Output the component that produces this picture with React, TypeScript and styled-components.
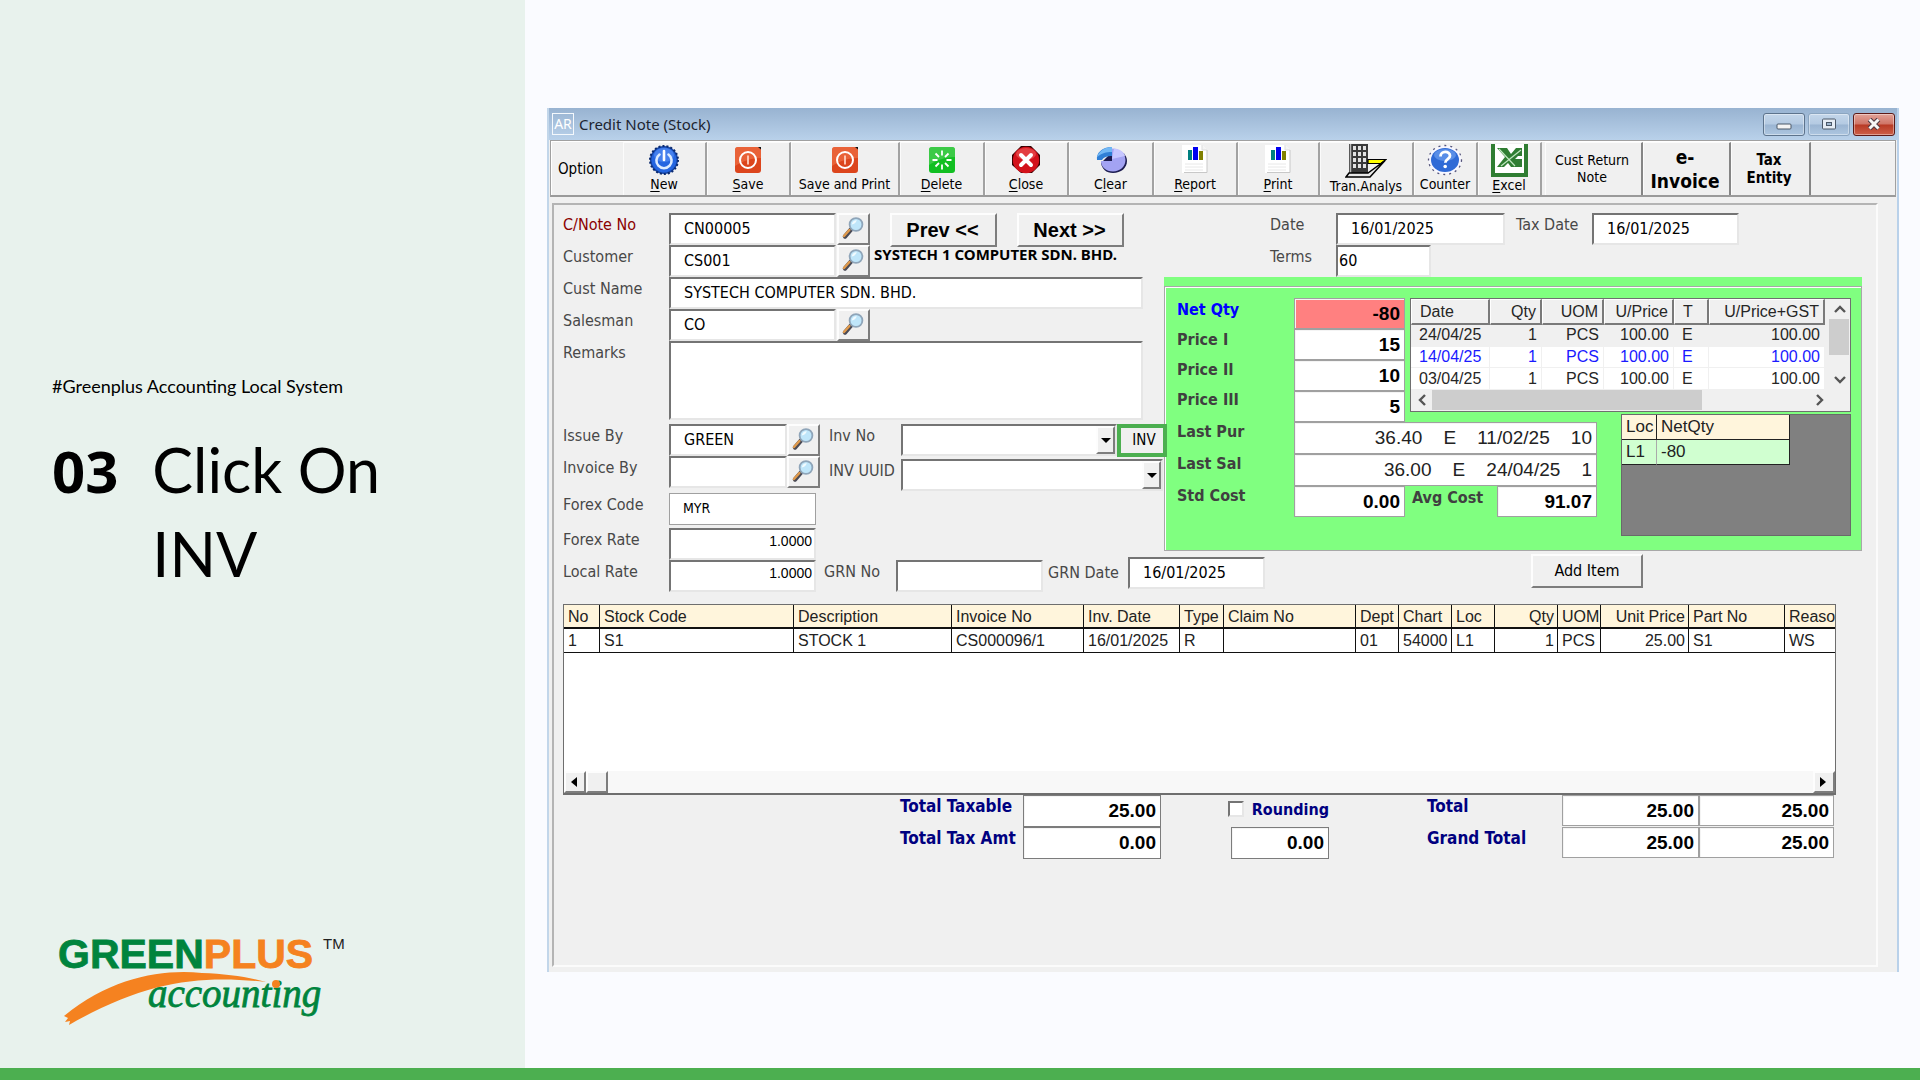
import React from "react";
import styled, { createGlobalStyle, css } from "styled-components";

const ui = `"DejaVu Sans Condensed", "DejaVu Sans", "Noto Sans", sans-serif`;
const arial = `"Liberation Sans", Arial, sans-serif`;
const noto = `"Noto Sans", "Open Sans", sans-serif`;

const Global = createGlobalStyle`
  * { box-sizing: border-box; }
  body { margin: 0; background: #fafbff; }
  button, input, select, textarea { font: inherit; color: inherit; border-radius: 0; margin: 0; }
`;

/* ---------- slide ---------- */
const Slide = styled.div`
  min-height: 100vh;
  display: flex;
  flex-direction: column;
  background: #fafbff;
`;
const Columns = styled.div`
  flex: 1;
  display: flex;
`;
const Aside = styled.aside`
  flex: none;
  width: 525px;
  display: flex;
  flex-direction: column;
  padding: 372px 0 36px 52px;
  background: #e8f2ed;
  color: #000;
  font-family: Lato, sans-serif;
`;
const Tagline = styled.p`
  margin: 0;
  font-size: 18px;
  line-height: 28px;
`;
const Step = styled.h1`
  margin: 28px 0 0;
  display: flex;
  align-items: baseline;
  gap: 34px;
  font-size: 61px;
  line-height: 84px;
  font-weight: 400;
`;
const StepNo = styled.span`
  flex: none;
  font-family: "Open Sans", "Noto Sans", sans-serif;
  font-size: 58px;
  font-weight: 700;
`;
const StepText = styled.span`
  max-width: 300px;
`;
const Logo = styled.svg`
  display: block;
  margin-top: auto;
  width: 300px;
  height: 100px;
`;
const Footer = styled.footer`
  height: 12px;
  background: #4caf50;
`;
const Stage = styled.main`
  flex: 1;
  min-width: 0;
  padding: 108px 21px 90px 22px;
`;

/* ---------- window ---------- */
const Window = styled.section`
  background: #f0f0f0;
  border-left: 2px solid #c2d6ea;
  border-right: 2px solid #b9d1ea;
  font-family: ${ui};
  font-size: 16px;
  color: #000;
`;
const TitleBar = styled.header`
  height: 32px;
  display: flex;
  align-items: center;
  padding: 0 2px 0 3px;
  background: linear-gradient(#98b3d1, #b9d1ea);
`;
const AppBadge = styled.span`
  width: 22px;
  height: 22px;
  border: 1px solid #f4f8fc;
  color: #fff;
  font: 14px/20px ${noto};
  text-align: center;
`;
const Title = styled.h2`
  flex: 1;
  margin: 0 0 0 5px;
  font: 400 15px/24px ${noto};
  color: #1c2430;
`;
const WinButtons = styled.div`
  display: flex;
  gap: 3px;
`;
const WinButton = styled.button<{ $kind: "min" | "max" | "close" }>`
  width: 42px;
  height: 23px;
  padding: 0;
  display: grid;
  place-items: center;
  border: 1px solid ${(p) => (p.$kind === "close" ? "#5d1a17" : p.$kind === "min" ? "#5d738c" : "#8ba5c0")};
  border-radius: 3px;
  box-shadow: inset 0 0 0 1px rgba(255, 255, 255, 0.4);
  background: ${(p) =>
    p.$kind === "close"
      ? "linear-gradient(#e2a398, #cf7466 48%, #b83a25 52%, #cd6048)"
      : "linear-gradient(#c3d6ea, #b4cae2 48%, #9bb5d2 52%, #adc6e0)"};
`;

/* ---------- toolbar ---------- */
const Toolbar = styled.nav`
  height: 57px;
  display: flex;
  margin: 0 1px;
  border: 1px solid #a0a0a0;
  border-bottom: 2px solid #9a9a9a;
  box-shadow: inset 1px 1px 0 #fff;
  padding: 1px 0 0;
  font-size: 14px;
  line-height: 17px;
`;
const ToolCaption = styled.span`
  width: 72px;
  padding: 17px 0 0 7px;
  font-size: 15px;
  line-height: 20px;
`;
const Tool = styled.button<{ $w: number; $push?: boolean }>`
  flex: none;
  width: ${(p) => p.$w}px;
  margin-left: ${(p) => (p.$push ? 3 : 0)}px;
  padding: 1px 1px 0 0;
  display: flex;
  flex-direction: column;
  align-items: center;
  justify-content: space-between;
  background: #f0f0f0;
  border: 1px solid;
  border-width: 1px 2px 0 1px;
  border-color: #fbfbfb #a2a2a2 #a2a2a2 #fbfbfb;
  white-space: nowrap;
  svg { flex: none; width: 34px; height: 32px; }
  u { text-underline-offset: 2px; }
`;
const ToolLabel = styled.span`
  position: relative;
  height: 21px;
  line-height: 16px;
`;
const TextTool = styled(Tool)<{ $size?: number }>`
  justify-content: center;
  padding: 0 3px 0 0;
  white-space: pre-line;
  border-right-color: #858585;
  ${(p) => p.$size && css`
    font-weight: 700;
    font-size: ${p.$size}px;
    line-height: ${p.$size > 16 ? 24 : 18}px;
  `}
`;

/* ---------- form ---------- */
const Body = styled.div`
  padding: 6px 19px 5px 3px;
`;
const Panel = styled.form`
  border: 2px solid;
  border-color: #b4b4b4 #fbfbfb #fbfbfb #b4b4b4;
  padding: 8px 9px 106px;
`;
const FormGrid = styled.div`
  display: flex;
`;
const LeftCol = styled.div`
  flex: none;
  width: 601px;
`;
const RightCol = styled.div`
  flex: none;
  width: 698px;
`;
const Row = styled.div<{ $mb?: number; $pad?: number }>`
  display: flex;
  align-items: flex-start;
  margin-bottom: ${(p) => p.$mb ?? 0}px;
  padding-left: ${(p) => p.$pad ?? 0}px;
`;
const Label = styled.label<{ $w: number; $red?: boolean }>`
  flex: none;
  width: ${(p) => p.$w}px;
  line-height: 24px;
  white-space: nowrap;
  color: ${(p) => (p.$red ? "#8b0000" : "#484848")};
`;
const sunken = css`
  border: 2px solid;
  border-color: #747474 #e6e6e6 #e6e6e6 #747474;
  background: #fff;
  outline: none;
`;
const Input = styled.input<{ $w: number; $flat?: boolean; $pad?: number; $num?: boolean }>`
  flex: none;
  width: ${(p) => p.$w}px;
  height: 32px;
  padding: 0 2px 2px ${(p) => p.$pad ?? 13}px;
  ${sunken}
  ${(p) => p.$flat && css`border: 1px solid #a0a0a0; font-size: 14px;`}
  ${(p) => p.$num && css`
    padding-bottom: 6px;
    font-family: ${arial};
    font-size: 14px;
    text-align: right;
  `}
`;
const Memo = styled.textarea`
  ${sunken}
  display: block;
  width: 474px;
  height: 79px;
  padding: 4px 13px;
  resize: none;
`;
const raised = css`
  background: #f0f0f0;
  border: 2px solid;
  border-color: #fdfdfd #7d7d7d #7d7d7d #fdfdfd;
`;
const FindButton = styled.button<{ $gap?: number }>`
  ${raised}
  flex: none;
  width: 33px;
  height: 32px;
  margin-left: ${(p) => p.$gap ?? 0}px;
  padding: 0 2px 2px 0;
  display: grid;
  place-items: center;
`;
const NavButton = styled.button`
  ${raised}
  width: 107px;
  height: 34px;
  padding: 0 2px 0 0;
  font: 700 20px/28px ${arial};
`;
const NavButtons = styled.div`
  display: flex;
  gap: 20px;
  margin-left: 20px;
  height: 32px;
`;
const CustomerName = styled.output`
  margin-left: 4px;
  font: 700 15px/18px ${noto};
  white-space: nowrap;
`;
const Pairs = styled.div`
  display: flex;
  gap: 9px;
  height: 69px;
  white-space: nowrap;
`;
const Stack = styled.div<{ $gap?: number }>`
  display: flex;
  flex-direction: column;
  gap: ${(p) => p.$gap ?? 0}px;
`;
const Combo = styled.div<{ $w: number }>`
  ${sunken}
  flex: none;
  width: ${(p) => p.$w}px;
  height: 32px;
  display: grid;
  grid-template-columns: 1fr 19px;
  align-items: stretch;
  > * { grid-row: 1; }
`;
const Select = styled.select`
  grid-column: 1 / 3;
  appearance: none;
  border: 0;
  background: transparent;
  padding: 0 24px 0 13px;
  outline: none;
`;
const Arrow = styled.span`
  ${raised}
  grid-column: 2;
  display: grid;
  place-items: center;
  pointer-events: none;
  &::after {
    content: "";
    border: 5px solid transparent;
    border-top-color: #000;
    border-bottom: 0;
  }
`;
const InvButton = styled.button`
  position: relative;
  z-index: 1;
  flex: none;
  width: 50px;
  height: 33px;
  padding: 0 0 2px 4px;
  background: #f0f0f0;
  border: 4px solid #4caf50;
  font-size: 15px;
`;
const BottomRow = styled.div`
  display: flex;
  align-items: flex-end;
  height: 38px;
  margin-top: -6px;
`;
const GrnDate = styled.div`
  align-self: center;
  display: flex;
  align-items: center;
  margin-left: 5px;
`;
const AddButton = styled.button`
  ${raised}
  align-self: flex-start;
  width: 112px;
  height: 34px;
  margin-left: 266px;
  padding: 0 0 2px;
`;

/* ---------- price panel ---------- */
const Price = styled.section`
  height: 274px;
  padding-top: 9px;
  background: #80ff80;
`;
const PriceFrame = styled.div`
  height: 265px;
  display: flex;
  padding: 11px 0 0 12px;
  border: 1px solid #a8a8a8;
  box-shadow: inset 1px 1px 0 #fff;
`;
const PriceLabels = styled.div`
  flex: none;
  width: 117px;
  display: grid;
  grid-template-rows: 30px 30px 30px 32px 32px 32px;
  align-content: start;
`;
const BoldLabel = styled.label<{ $c?: string }>`
  font-weight: 700;
  line-height: 24px;
  white-space: nowrap;
  color: ${(p) => p.$c ?? "#404040"};
`;
const PriceGrid = styled.div`
  display: grid;
  grid-template-columns: 111px 5px 187px 24px 230px;
  grid-template-rows: 116px 8px 122px;
`;
const PriceInputs = styled.div`
  grid-column: 1;
  grid-row: 1 / 3;
`;
const History = styled.div`
  grid-column: 3 / 6;
  grid-row: 1;
`;
const LastInputs = styled.div`
  grid-column: 1 / 4;
  grid-row: 3;
`;
const LocArea = styled.div`
  grid-column: 5;
  grid-row: 2 / 4;
  height: 122px;
  background: #808080;
  border: 1px solid #6a6a6a;
`;
const NumInput = styled.input<{ $w: number; $h?: number; $bg?: string; $regular?: boolean; $deep?: boolean }>`
  display: block;
  flex: none;
  width: ${(p) => p.$w}px;
  height: ${(p) => p.$h ?? 31}px;
  padding: 0 4px 0;
  border: 1px solid ${(p) => (p.$deep ? "#7c7c7c" : "#a0a0a0")};
  box-shadow: inset 1px 1px 0 #f4f4f4;
  background: ${(p) => p.$bg ?? "#fff"};
  font: ${(p) => (p.$regular ? 400 : 700)} 19px ${arial};
  text-align: right;
  outline: none;
  color: ${(p) => (p.$regular ? "#222" : "#000")};
`;
const AvgLabel = styled(BoldLabel)`
  width: 92px;
  padding-left: 7px;
`;

const ListBox = styled.div`
  height: 114px;
  display: grid;
  grid-template-columns: 1fr 21px;
  grid-template-rows: 1fr 21px;
  border: 1px solid #6f6f6f;
  background: #f0f0f0;
  font: 16px/20px ${arial};
  color: #262626;
`;
const HistoryTable = styled.table`
  width: 414px;
  table-layout: fixed;
  border-collapse: separate;
  border-spacing: 0;
  background: #fff;
  th, td { padding: 0 4px 0 8px; font-weight: 400; white-space: nowrap; }
  th {
    height: 26px;
    padding-top: 1px;
    background: #f0f0f0;
    border: 1px solid;
    border-width: 1px 2px 2px 1px;
    border-color: #fff #7a7a7a #7a7a7a #fff;
  }
  td { height: 21px; border: 1px solid #f0f0f0; border-width: 0 1px 1px 0; }
`;
const HCell = styled.td<{ $right?: boolean }>`
  text-align: ${(p) => (p.$right ? "right" : "left")};
`;
const HRow = styled.tr<{ $shade?: boolean; $blue?: boolean }>`
  background: ${(p) => (p.$shade ? "#f0f0f0" : "#fff")};
  color: ${(p) => (p.$blue ? "#1a1aff" : "inherit")};
`;
const VScroll = styled.div`
  display: flex;
  flex-direction: column;
`;
const HScroll = styled.div`
  grid-column: 1 / 3;
  display: flex;
  padding-right: 20px;
`;
const ScrollButton = styled.button`
  flex: none;
  width: 21px;
  height: 20px;
  padding: 0;
  border: 0;
  background: transparent;
  display: grid;
  place-items: center;
`;
const Thumb = styled.div<{ $w?: number; $h?: number }>`
  width: ${(p) => p.$w ?? 20}px;
  height: ${(p) => p.$h ?? 20}px;
  background: #cdcdcd;
`;
const Spring = styled.div`
  flex: 1;
`;
const LocTable = styled.table`
  width: 168px;
  table-layout: fixed;
  border-collapse: separate;
  border-spacing: 0;
  font: 17px/22px ${arial};
  color: #222;
  th, td {
    height: 25px;
    padding: 0 0 0 4px;
    text-align: left;
    font-weight: 400;
    border: 0 solid #222;
    border-width: 0 1px 1px 0;
  }
  th { background: #fff5dc; }
  td { background: #d0ffd0; }
  td:first-child { border-right-color: #aaa; }
`;

/* ---------- items ---------- */
const Items = styled.div`
  width: 1273px;
  height: 191px;
  margin-top: 12px;
  display: flex;
  flex-direction: column;
  justify-content: space-between;
  border: 1px solid #6e6e6e;
  border-bottom-width: 2px;
  background: #fff;
  overflow: hidden;
`;
const ItemsTable = styled.table`
  width: 1273px;
  table-layout: fixed;
  border-collapse: separate;
  border-spacing: 0;
  font: 16px/20px ${arial};
  color: #222;
  th, td {
    height: 24px;
    padding: 0 0 0 4px;
    font-weight: 400;
    white-space: nowrap;
    overflow: hidden;
    border: 0 solid #111;
    border-width: 0 1px 1px 0;
  }
  th { padding-top: 2px; background: #fff5dc; border-bottom-width: 2px; }
`;
const ItemHead = styled.th<{ $right?: boolean }>`
  text-align: ${(p) => (p.$right ? "right" : "left")};
  && { padding-right: ${(p) => (p.$right ? 3 : 0)}px; }
`;
const ItemCell = styled.td<{ $right?: boolean }>`
  text-align: ${(p) => (p.$right ? "right" : "left")};
  && { padding-right: ${(p) => (p.$right ? 3 : 0)}px; }
`;
const ItemsScroll = styled.div`
  height: 22px;
  display: flex;
  background: #f8f8f8;
`;
const ClassicScroll = styled.button`
  ${raised}
  width: 22px;
  height: 22px;
  padding: 0 2px 0 0;
  display: grid;
  place-items: center;
`;

/* ---------- totals ---------- */
const Totals = styled.div`
  display: flex;
  align-items: flex-start;
  padding-left: 337px;
`;
const TotalGroup = styled.div<{ $label: number; $ml?: number }>`
  display: grid;
  grid-template-columns: ${(p) => p.$label}px auto auto;
  grid-auto-rows: 32px;
  margin-left: ${(p) => p.$ml ?? 0}px;
`;
const TotalLabel = styled(BoldLabel)`
  color: #000080;
  font-size: 17px;
  line-height: 22px;
`;
const RoundingGroup = styled.div`
  width: 101px;
  margin-left: 67px;
`;
const RoundingCheck = styled.label`
  height: 32px;
  display: flex;
  align-items: center;
  gap: 8px;
  padding-bottom: 4px;
  font-weight: 700;
  color: #000080;
  input {
    appearance: none;
    width: 16px;
    height: 16px;
    ${sunken}
  }
`;
const RoundingValue = styled.div`
  padding-left: 3px;
`;

/* ---------- icons ---------- */
const Magnifier = () => (
  <svg width="24" height="24" viewBox="0 0 24 24" aria-hidden="true">
    <path d="M10 13.500 L4 20.500" stroke="#4a4a55" strokeWidth="4.4" strokeLinecap="round" />
    <path d="M8.400 14 L3 20" stroke="#e09a4c" strokeWidth="2.4" strokeLinecap="round" />
    <circle cx="15" cy="8.500" r="6.4" fill="#bfe6fa" stroke="#8fa5b9" strokeWidth="1.8" />
    <path d="M10.8 8.500a4.4 4.4 0 0 1 5-4.200c-1 2.500-2.500 3.800-5 4.200z" fill="#f1fbff" />
  </svg>
);
const NewIcon = () => (
  <svg viewBox="0 0 34 32" aria-hidden="true">
    <circle cx="17" cy="16" r="14" fill="#1746a8" strokeDasharray="2 2" stroke="#0b2a6e" strokeWidth="2" />
    <circle cx="17" cy="16" r="12.500" fill="#2465e0" />
    <ellipse cx="17" cy="11" rx="10" ry="7" fill="#5b93f5" opacity=".6" />
    <path d="M12.500 10.500a7.600 7.600 0 1 0 9 0" fill="none" stroke="#dcebff" strokeWidth="2.600" strokeLinecap="round" />
    <path d="M17 7v9" stroke="#fff" strokeWidth="2.600" strokeLinecap="round" />
  </svg>
);
const SaveIcon = () => (
  <svg viewBox="0 0 34 32" aria-hidden="true">
    <rect x="4" y="3" width="26" height="26" rx="3" fill="#dc451c" />
    <path d="M7 3h20a3 3 0 0 1 3 3v8C20 14 12 17 4 22V6a3 3 0 0 1 3-3z" fill="#ee6f45" opacity=".7" />
    <path d="M27 3h3v2.500z" fill="#111" />
    <circle cx="17" cy="16" r="8" fill="none" stroke="#fff" strokeWidth="2" />
    <path d="M17 11.500v9" stroke="#ffd0c0" strokeWidth="1.800" />
  </svg>
);
const DeleteIcon = () => (
  <svg viewBox="0 0 34 32" aria-hidden="true">
    <rect x="4" y="3" width="26" height="26" rx="3" fill="#12bf22" />
    <path d="M7 3h20a3 3 0 0 1 3 3v7C20 13 12 16 4 21V6a3 3 0 0 1 3-3z" fill="#4fce57" opacity=".7" />
    <path
      d="M17 6.500v5M17 20.500v5M7.500 16h5M21.500 16h5M10.500 9.500l3.500 3.500M20 19l3.500 3.500M10.500 22.500L14 19M20 13l3.500-3.500"
      stroke="#fff"
      strokeWidth="1.800"
    />
  </svg>
);
const CloseIcon = () => (
  <svg viewBox="0 0 34 32" aria-hidden="true">
    <path d="M12 2h10l9 9v10l-8 8H12l-9-8V11z" fill="#300" />
    <circle cx="17" cy="16" r="13.200" fill="#d3121b" />
    <ellipse cx="17" cy="10" rx="10" ry="6" fill="#ef5b5b" opacity=".6" />
    <path d="M12 11l10 10M22 11l-10 10" stroke="#fff" strokeWidth="4" strokeLinecap="round" />
  </svg>
);
const ClearIcon = () => (
  <svg viewBox="0 0 34 32" aria-hidden="true">
    <path d="M20 6c8 0 13 5 13 11 0 7-6 12-14 12-7 0-11-4-12-10z" fill="#1c1c50" />
    <path d="M18 17V4.500c8 0 13.500 5 13.500 11.500S26 27.500 19 27.500 7 23 7 17z" fill="#a3a3f3" />
    <path d="M18 15l13-3c-1-4-5-7-11-7.500z" fill="#c6c6ff" />
    <path d="M3 16c-1-7 5-13 15-13v9c-5 0-8 1-10 4z" fill="#2f7fd6" />
    <path d="M3 13c2-6 8-10 15-10v5c-6 0-10 1-15 5z" fill="#72b8f5" />
  </svg>
);
const ChartIcon = () => (
  <svg viewBox="0 0 34 32" aria-hidden="true">
    <path d="M4 1h20l5 5v23H4z" fill="#fff" />
    <path d="M24 1v5h5" fill="#f4f4f4" stroke="#ddd" />
    <path d="M29 6v22.500H6" fill="none" stroke="#c8c8c8" />
    <rect x="10" y="6" width="4" height="10" fill="#008080" />
    <rect x="15" y="3" width="5" height="13" fill="#0000f0" />
    <rect x="21" y="7" width="4" height="9" fill="#808000" />
    <path d="M7 20h18M7 23h18M7 26h18" stroke="#e8e8e8" />
  </svg>
);
const AnalysDrawing = styled.svg`
  && { width: 42px; height: 34px; }
`;
const AnalysIcon = () => (
  <AnalysDrawing viewBox="0 0 42 34" aria-hidden="true">
    <path d="M4 0v29h19V0z" fill="#3a3a3a" />
    <path
      d="M8 2h3v4H8zM13 2h3v4h-3zM18 2h3v4h-3zM8 8h3v4H8zM13 8h3v4h-3zM18 8h3v4h-3zM8 14h3v4H8zM13 14h3v4h-3zM18 14h3v4h-3zM8 20h3v4H8zM13 20h3v4h-3zM18 20h3v4h-3z"
      fill="#e2e2e2"
    />
    <path d="M5.500 0v29" stroke="#bbb" strokeWidth="1.500" />
    <path d="M23 15.500h18l-5 4H23z" fill="#ffff00" stroke="#000" strokeWidth="1.200" />
    <path d="M4 29h19l17-12.500L25 33H1z" fill="#e8e8e8" stroke="#000" strokeWidth="1.500" />
  </AnalysDrawing>
);
const HelpDrawing = styled.svg`
  && { width: 36px; }
`;
const HelpIcon = () => (
  <HelpDrawing viewBox="0 0 36 32" aria-hidden="true">
    <ellipse cx="18" cy="16" rx="16.500" ry="14.500" fill="#f7f7ff" stroke="#55557c" strokeWidth="1.300" strokeDasharray="2 4" />
    <ellipse cx="18" cy="16" rx="14" ry="12" fill="#2f6ad6" />
    <ellipse cx="18" cy="11" rx="11" ry="6" fill="#77a7f2" opacity=".6" />
    <path d="M13.500 12.500c0-6 9.500-6 9.500-.8 0 3.500-4.700 3.300-4.700 7" fill="none" stroke="#fff" strokeWidth="2.800" />
    <circle cx="18.200" cy="22.500" r="1.800" fill="#fff" />
  </HelpDrawing>
);
const ExcelDrawing = styled.svg`
  && { width: 37px; height: 33px; }
`;
const ExcelIcon = () => (
  <ExcelDrawing viewBox="0 0 37 33" aria-hidden="true">
    <path d="M2 0v31h33V0" fill="#fff" stroke="#2f7d32" strokeWidth="4" />
    <path d="M6 4h10l4 6 5-6h6v8h-4l-3 3h7v8H20l-3-4-4 4H6l8-10z" fill="#2f7d32" />
    <path d="M8 5l16 17M30 6L10 22" stroke="#bfe6bf" strokeWidth="1.200" />
  </ExcelDrawing>
);
const Chevron = ({ d }: { d: string }) => (
  <svg width="12" height="12" viewBox="0 0 12 12" aria-hidden="true">
    <path d={d} fill="none" stroke="#555" strokeWidth="2.400" />
  </svg>
);

/* ---------- data ---------- */
const tools = [
  { w: 84, icon: <NewIcon />, text: <><u>N</u>ew</> },
  { w: 84, icon: <SaveIcon />, text: <><u>S</u>ave</> },
  { w: 109, icon: <SaveIcon />, text: <>Sa<u>v</u>e and Print</> },
  { w: 85, icon: <DeleteIcon />, text: <><u>D</u>elete</> },
  { w: 84, icon: <CloseIcon />, text: <><u>C</u>lose</> },
  { w: 85, icon: <ClearIcon />, text: <>C<u>l</u>ear</> },
  { w: 84, icon: <ChartIcon />, text: <><u>R</u>eport</> },
  { w: 82, icon: <ChartIcon />, text: <><u>P</u>rint</> },
  { w: 94, icon: <AnalysIcon />, text: <>Tran.Analys</> },
  { w: 64, icon: <HelpIcon />, text: <>Counter</> },
  { w: 64, icon: <ExcelIcon />, text: <><u>E</u>xcel</> },
];

const historyCols = [
  { name: "Date", w: 79 },
  { name: "Qty", w: 52, right: true },
  { name: "UOM", w: 62, right: true },
  { name: "U/Price", w: 70, right: true },
  { name: "T", w: 35 },
  { name: "U/Price+GST", w: 116, right: true },
];
const historyRows = [
  ["24/04/25", "1", "PCS", "100.00", "E", "100.00"],
  ["14/04/25", "1", "PCS", "100.00", "E", "100.00"],
  ["03/04/25", "1", "PCS", "100.00", "E", "100.00"],
];

const itemCols = [
  { name: "No", w: 36, value: "1" },
  { name: "Stock Code", w: 194, value: "S1" },
  { name: "Description", w: 158, value: "STOCK 1" },
  { name: "Invoice No", w: 132, value: "CS000096/1" },
  { name: "Inv. Date", w: 96, value: "16/01/2025" },
  { name: "Type", w: 44, value: "R" },
  { name: "Claim No", w: 132, value: "" },
  { name: "Dept", w: 43, value: "01" },
  { name: "Chart", w: 53, value: "54000" },
  { name: "Loc", w: 43, value: "L1" },
  { name: "Qty", w: 63, value: "1", right: true },
  { name: "UOM", w: 43, value: "PCS" },
  { name: "Unit Price", w: 88, value: "25.00", right: true },
  { name: "Part No", w: 96, value: "S1" },
  { name: "Reason", w: 52, value: "WS" },
];

const sp = "    ";

const Find = ({ of, gap }: { of: string; gap?: number }) => (
  <FindButton type="button" aria-label={`Find ${of}`} $gap={gap}>
    <Magnifier />
  </FindButton>
);

const Dropdown = ({ id, w }: { id: string; w: number }) => (
  <Combo $w={w}>
    <Select id={id}>
      <option value="" />
    </Select>
    <Arrow />
  </Combo>
);

export default function App() {
  return (
    <Slide>
      <Global />
      <Columns>
        <Aside>
          <Tagline>#Greenplus Accounting Local System</Tagline>
          <Step>
            <StepNo>03</StepNo>
            <StepText>Click On INV</StepText>
          </Step>
          <Logo viewBox="0 0 300 100" role="img" aria-label="Greenplus accounting">
            <text
              x="6" y="36"
              fontFamily="Liberation Sans, Arial, sans-serif" fontWeight="700" fontSize="41"
              fill="#00843d" stroke="#00843d" strokeWidth=".8"
            >
              GREEN<tspan fill="#f58220" stroke="#f58220">PLUS</tspan>
            </text>
            <text x="271" y="17" fontFamily="Liberation Sans, Arial, sans-serif" fontSize="15" fill="#222">TM</text>
            <path
              d="M12 84C60 45 110 37 150 41C175 42 197 45 214 50C150 43 95 48 17 93L18 89L13 90L16 86z"
              fill="#f58220"
            />
            <text
              x="96" y="75"
              fontFamily="Liberation Serif, serif" fontStyle="italic" fontSize="39"
              fill="#00843d" stroke="#00843d" strokeWidth=".8"
            >
              accounting
            </text>
            <circle cx="224" cy="52" r="4" fill="#f58220" />
          </Logo>
        </Aside>

        <Stage>
          <Window>
            <TitleBar>
              <AppBadge>AR</AppBadge>
              <Title>Credit Note (Stock)</Title>
              <WinButtons>
                <WinButton $kind="min" aria-label="Minimize">
                  <svg width="16" height="12"><rect x="1" y="6" width="14" height="5" rx="1" fill="#f4f4f4" stroke="#4b5868" /></svg>
                </WinButton>
                <WinButton $kind="max" aria-label="Maximize">
                  <svg width="16" height="12">
                    <rect x="1.500" y="1" width="13" height="10" rx="1" fill="#e6edf5" stroke="#4b5868" />
                    <rect x="5.500" y="4.500" width="5" height="3" fill="#9fb7d0" stroke="#4b5868" />
                  </svg>
                </WinButton>
                <WinButton $kind="close" aria-label="Close window">
                  <svg width="16" height="12">
                    <path d="M3.500 1.500l9 9M12.500 1.500l-9 9" stroke="#4c3a44" strokeWidth="5" />
                    <path d="M3.500 1.500l9 9M12.500 1.500l-9 9" stroke="#f6f6f6" strokeWidth="3" />
                  </svg>
                </WinButton>
              </WinButtons>
            </TitleBar>

            <Toolbar>
              <ToolCaption>Option</ToolCaption>
              {tools.map((t, i) => (
                <Tool key={i} type="button" $w={t.w}>
                  {t.icon}
                  <ToolLabel>{t.text}</ToolLabel>
                </Tool>
              ))}
              <TextTool type="button" $w={98} $push>{"Cust Return\nNote"}</TextTool>
              <TextTool type="button" $w={88} $size={19}>{"e-\nInvoice"}</TextTool>
              <TextTool type="button" $w={80} $size={15}>{"Tax\nEntity"}</TextTool>
            </Toolbar>

            <Body>
              <Panel>
                <FormGrid>
                  <LeftCol>
                    <Row>
                      <Label htmlFor="cnote" $w={106} $red>C/Note No</Label>
                      <Input id="cnote" $w={167} defaultValue="CN00005" />
                      <Find of="credit note" gap={1} />
                      <NavButtons>
                        <NavButton type="button">Prev &lt;&lt;</NavButton>
                        <NavButton type="button">Next &gt;&gt;</NavButton>
                      </NavButtons>
                    </Row>
                    <Row>
                      <Label htmlFor="customer" $w={106}>Customer</Label>
                      <Input id="customer" $w={167} defaultValue="CS001" />
                      <Find of="customer" gap={1} />
                      <CustomerName>SYSTECH 1 COMPUTER SDN. BHD.</CustomerName>
                    </Row>
                    <Row>
                      <Label htmlFor="custname" $w={106}>Cust Name</Label>
                      <Input id="custname" $w={474} defaultValue="SYSTECH COMPUTER SDN. BHD." />
                    </Row>
                    <Row>
                      <Label htmlFor="salesman" $w={106}>Salesman</Label>
                      <Input id="salesman" $w={167} defaultValue="CO" />
                      <Find of="salesman" gap={1} />
                    </Row>
                    <Row $mb={4}>
                      <Label htmlFor="remarks" $w={106}>Remarks</Label>
                      <Memo id="remarks" />
                    </Row>
                    <Pairs>
                      <Stack>
                        <Row>
                          <Label htmlFor="issue" $w={106}>Issue By</Label>
                          <Input id="issue" $w={118} defaultValue="GREEN" />
                          <Find of="issuer" />
                        </Row>
                        <Row>
                          <Label htmlFor="invoiceby" $w={106}>Invoice By</Label>
                          <Input id="invoiceby" $w={118} />
                          <Find of="invoicer" />
                        </Row>
                      </Stack>
                      <Stack $gap={2}>
                        <Row>
                          <Label htmlFor="invno" $w={72}>Inv No</Label>
                          <Dropdown id="invno" w={216} />
                          <InvButton type="button">INV</InvButton>
                        </Row>
                        <Row>
                          <Label htmlFor="uuid" $w={72}>INV UUID</Label>
                          <Dropdown id="uuid" w={262} />
                        </Row>
                      </Stack>
                    </Pairs>
                    <Row $mb={3}>
                      <Label htmlFor="fxcode" $w={106}>Forex Code</Label>
                      <Input id="fxcode" $w={147} $flat defaultValue="MYR" />
                    </Row>
                    <Row>
                      <Label htmlFor="fxrate" $w={106}>Forex Rate</Label>
                      <Input id="fxrate" $w={147} $num defaultValue="1.0000" />
                    </Row>
                  </LeftCol>

                  <RightCol>
                    <Row $pad={106}>
                      <Label htmlFor="date" $w={66}>Date</Label>
                      <Input id="date" $w={169} defaultValue="16/01/2025" />
                      <Row $pad={11}>
                        <Label htmlFor="taxdate" $w={76}>Tax Date</Label>
                        <Input id="taxdate" $w={147} defaultValue="16/01/2025" />
                      </Row>
                    </Row>
                    <Row $pad={106}>
                      <Label htmlFor="terms" $w={66}>Terms</Label>
                      <Input id="terms" $w={95} $pad={1} defaultValue="60" />
                    </Row>
                    <Price>
                      <PriceFrame>
                        <PriceLabels>
                          <BoldLabel htmlFor="netqty" $c="#0000ff">Net Qty</BoldLabel>
                          <BoldLabel htmlFor="p1">Price I</BoldLabel>
                          <BoldLabel htmlFor="p2">Price II</BoldLabel>
                          <BoldLabel htmlFor="p3">Price III</BoldLabel>
                          <BoldLabel htmlFor="lastpur">Last Pur</BoldLabel>
                          <BoldLabel htmlFor="lastsal">Last Sal</BoldLabel>
                          <BoldLabel htmlFor="std">Std Cost</BoldLabel>
                        </PriceLabels>
                        <PriceGrid>
                          <PriceInputs>
                            <NumInput id="netqty" $w={111} $bg="#ff8080" defaultValue="-80" />
                            <NumInput id="p1" $w={111} defaultValue="15" />
                            <NumInput id="p2" $w={111} defaultValue="10" />
                            <NumInput id="p3" $w={111} defaultValue="5" />
                          </PriceInputs>
                          <History>
                            <ListBox>
                              <HistoryTable>
                                <colgroup>
                                  {historyCols.map((c) => <col key={c.name} width={c.w} />)}
                                </colgroup>
                                <thead>
                                  <tr>
                                    {historyCols.map((c) => (
                                      <HCell as="th" key={c.name} $right={c.right}>{c.name}</HCell>
                                    ))}
                                  </tr>
                                </thead>
                                <tbody>
                                  {historyRows.map((r, i) => (
                                    <HRow key={i} $shade={i === 0} $blue={i === 1}>
                                      {r.map((v, j) => <HCell key={j} $right={historyCols[j].right}>{v}</HCell>)}
                                    </HRow>
                                  ))}
                                </tbody>
                              </HistoryTable>
                              <VScroll>
                                <ScrollButton type="button" aria-label="Scroll up"><Chevron d="M1 9l5-5 5 5" /></ScrollButton>
                                <Thumb $h={36} />
                                <Spring />
                                <ScrollButton type="button" aria-label="Scroll down"><Chevron d="M1 3l5 5 5-5" /></ScrollButton>
                              </VScroll>
                              <HScroll>
                                <ScrollButton type="button" aria-label="Scroll left"><Chevron d="M9 1L4 6l5 5" /></ScrollButton>
                                <Thumb $w={270} />
                                <Spring />
                                <ScrollButton type="button" aria-label="Scroll right"><Chevron d="M3 1l5 5-5 5" /></ScrollButton>
                              </HScroll>
                            </ListBox>
                          </History>
                          <LastInputs>
                            <NumInput id="lastpur" $w={303} $h={32} $regular defaultValue={`36.40${sp}E${sp}11/02/25${sp}10`} />
                            <NumInput id="lastsal" $w={303} $h={32} $regular defaultValue={`36.00${sp}E${sp}24/04/25${sp}1`} />
                            <Row>
                              <NumInput id="std" $w={111} defaultValue="0.00" />
                              <AvgLabel htmlFor="avg">Avg Cost</AvgLabel>
                              <NumInput id="avg" $w={100} defaultValue="91.07" />
                            </Row>
                          </LastInputs>
                          <LocArea>
                            <LocTable>
                              <colgroup><col width={35} /><col /></colgroup>
                              <thead><tr><th>Loc</th><th>NetQty</th></tr></thead>
                              <tbody><tr><td>L1</td><td>-80</td></tr></tbody>
                            </LocTable>
                          </LocArea>
                        </PriceGrid>
                      </PriceFrame>
                    </Price>
                  </RightCol>
                </FormGrid>

                <BottomRow>
                  <Row>
                    <Label htmlFor="localrate" $w={106}>Local Rate</Label>
                    <Input id="localrate" $w={147} $num defaultValue="1.0000" />
                  </Row>
                  <Row $pad={8}>
                    <Label htmlFor="grn" $w={72}>GRN No</Label>
                    <Input id="grn" $w={147} />
                  </Row>
                  <GrnDate>
                    <Label htmlFor="grndate" $w={80}>GRN Date</Label>
                    <Input id="grndate" $w={137} defaultValue="16/01/2025" />
                  </GrnDate>
                  <AddButton type="button">Add Item</AddButton>
                </BottomRow>

                <Items>
                  <ItemsTable>
                    <colgroup>
                      {itemCols.map((c) => <col key={c.name} width={c.w} />)}
                    </colgroup>
                    <thead>
                      <tr>{itemCols.map((c) => <ItemHead key={c.name} $right={c.right}>{c.name}</ItemHead>)}</tr>
                    </thead>
                    <tbody>
                      <tr>{itemCols.map((c) => <ItemCell key={c.name} $right={c.right}>{c.value}</ItemCell>)}</tr>
                    </tbody>
                  </ItemsTable>
                  <ItemsScroll>
                    <ClassicScroll type="button" aria-label="Scroll items left">
                      <svg width="8" height="10"><path d="M7 0v10L1 5z" /></svg>
                    </ClassicScroll>
                    <ClassicScroll type="button" aria-label="Scroll position" />
                    <Spring />
                    <ClassicScroll type="button" aria-label="Scroll items right">
                      <svg width="8" height="10"><path d="M1 0v10l6-5z" /></svg>
                    </ClassicScroll>
                  </ItemsScroll>
                </Items>

                <Totals>
                  <TotalGroup $label={123}>
                    <TotalLabel htmlFor="taxable">Total Taxable</TotalLabel>
                    <NumInput id="taxable" $w={138} $h={32} $deep defaultValue="25.00" />
                    <span />
                    <TotalLabel htmlFor="taxamt">Total Tax Amt</TotalLabel>
                    <NumInput id="taxamt" $w={138} $h={32} $deep defaultValue="0.00" />
                  </TotalGroup>
                  <RoundingGroup>
                    <RoundingCheck><input type="checkbox" />Rounding</RoundingCheck>
                    <RoundingValue>
                      <NumInput aria-label="Rounding amount" $w={98} $h={32} $deep defaultValue="0.00" />
                    </RoundingValue>
                  </RoundingGroup>
                  <TotalGroup $label={135} $ml={98}>
                    <TotalLabel htmlFor="total">Total</TotalLabel>
                    <NumInput id="total" $w={137} defaultValue="25.00" />
                    <NumInput aria-label="Total, local" $w={135} defaultValue="25.00" />
                    <TotalLabel htmlFor="grand">Grand Total</TotalLabel>
                    <NumInput id="grand" $w={137} defaultValue="25.00" />
                    <NumInput aria-label="Grand total, local" $w={135} defaultValue="25.00" />
                  </TotalGroup>
                </Totals>
              </Panel>
            </Body>
          </Window>
        </Stage>
      </Columns>
      <Footer />
    </Slide>
  );
}
